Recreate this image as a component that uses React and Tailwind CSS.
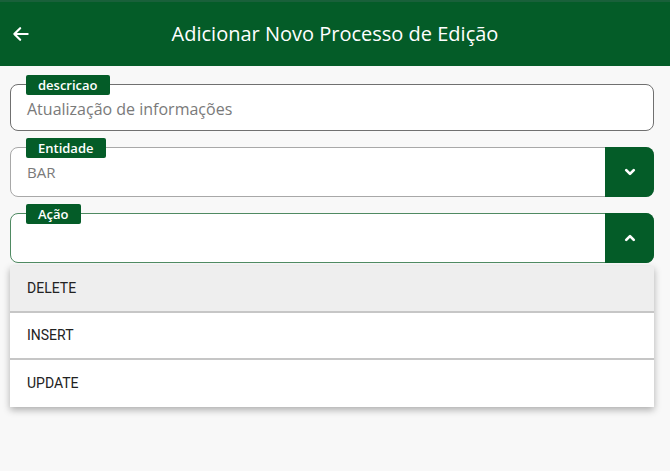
import React from 'react';

const GREEN = 'bg-[#045c28]';

const Chevron = ({ up }) => (
  <svg width="18" height="18" viewBox="0 0 24 24" fill="none" stroke="white" strokeWidth="3.6" strokeLinecap="round" strokeLinejoin="round">
    <path d={up ? 'M7 14.5l5-5 5 5' : 'M7 9.5l5 5 5-5'} />
  </svg>
);

const Tag = ({ children }) => (
  <span className={`absolute -top-[10px] left-[15px] h-[20px] ${GREEN} rounded-[2px] px-[12px] text-[13px] leading-[20px] text-white font-semibold`}>
    {children}
  </span>
);

export default function App() {
  const items = ['DELETE', 'INSERT', 'UPDATE'];

  return (
    <div className="min-h-[471px] bg-[#f8f8f8] font-['Open_Sans','Noto_Sans',sans-serif]">
      <header className={`h-[66px] ${GREEN} border-t-2 border-[#19603a] flex items-center relative`}>
        <svg className="ml-[11px]" width="20" height="20" viewBox="0 0 24 24" fill="none" stroke="white" strokeWidth="2.6" strokeLinecap="round" strokeLinejoin="round">
          <path d="M20 12H4M11 5l-7 7 7 7" />
        </svg>
        <h1 className="flex-1 text-center pr-[31px] text-white text-[20px] font-medium">
          Adicionar Novo Processo de Edição
        </h1>
      </header>

      <div className="pl-[10px] pr-[16px] pt-[18px]">
        <div className="relative h-[47px] rounded-lg border border-[#707070] bg-white flex items-center pl-[16px]">
          <Tag>descricao</Tag>
          <span className="text-[16px] text-[#7a7a7a] pt-[2px]">Atualização de informações</span>
        </div>

        <div className="relative mt-[16px] h-[50px] rounded-lg border border-[#a8a8a8] bg-white flex items-center">
          <Tag>Entidade</Tag>
          <span className="flex-1 pl-[16px] text-[15px] text-[#7a7a7a]">BAR</span>
          <div className={`w-[49px] self-stretch -my-px -mr-px rounded-r-lg ${GREEN} flex items-center justify-center`}>
            <Chevron />
          </div>
        </div>

        <div className="relative mt-[16px] h-[50px] rounded-lg border border-[#4f8a62] bg-white flex items-center">
          <Tag>Ação</Tag>
          <span className="flex-1" />
          <div className={`w-[49px] self-stretch -my-px -mr-px rounded-r-lg ${GREEN} flex items-center justify-center`}>
            <Chevron up />
          </div>
        </div>

        <ul className="mt-[3px] bg-white shadow-[0_3px_7px_rgba(0,0,0,0.3)] font-['Roboto',sans-serif]">
          {items.map((it, i) => (
            <li
              key={it}
              className={`h-[47px] flex items-center pl-[17px] text-[14px] text-[#222] ${i === 0 ? 'bg-[#eeeeee]' : 'bg-white'} ${i < items.length - 1 ? 'border-b-2 border-[#c6c6c6]' : ''}`}
            >
              {it}
            </li>
          ))}
        </ul>
      </div>
    </div>
  );
}
